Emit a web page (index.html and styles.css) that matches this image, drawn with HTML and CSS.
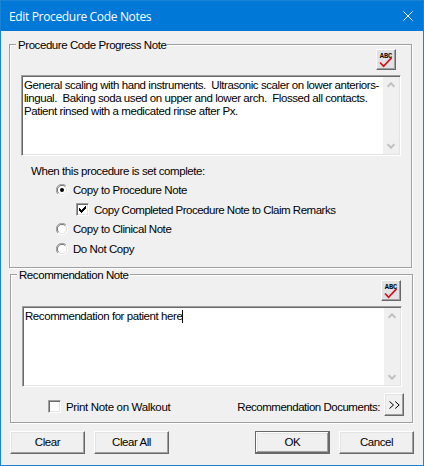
FILE: index.html
```html
<!DOCTYPE html>
<html lang="en">
<head>
    <meta charset="UTF-8">
    <meta name="viewport" content="width=device-width, initial-scale=1.0">
    <title>Edit Procedure Code Notes</title>
    <link rel="stylesheet" href="styles.css">
</head>
<body>
    <div class="window">
        <div class="titlebar">
            <span class="title">Edit Procedure Code Notes</span>
            <svg class="close" width="10" height="10" viewBox="0 0 10 10"><path d="M0.4 0.4L9.6 9.6M9.6 0.4L0.4 9.6"/></svg>
        </div>

        <div class="group progress">
            <span class="legend">Procedure Code Progress Note</span>
            <div class="spell">
                <span>ABC</span>
                <svg width="14" height="11" viewBox="0 0 14 11"><path d="M1 5.5L4.6 9.3L12.5 0.8"/></svg>
            </div>
            <div class="textbox">
                <div class="text">General scaling with hand instruments.&nbsp; Ultrasonic scaler on lower anteriors-<br>lingual.&nbsp; Baking soda used on upper and lower arch.&nbsp; Flossed all contacts.<br>Patient rinsed with a medicated rinse after Px.</div>
                <div class="scrollbar">
                    <svg width="8" height="6" viewBox="0 0 8 6"><path d="M0.5 4.8L4 1.3L7.5 4.8"/></svg>
                    <svg width="8" height="6" viewBox="0 0 8 6"><path d="M0.5 1.2L4 4.7L7.5 1.2"/></svg>
                </div>
            </div>
            <p class="when">When this procedure is set complete:</p>
            <div class="option">
                <svg class="radio" width="12" height="12" viewBox="0 0 12 12"><use href="#radio-ring"/><circle cx="6" cy="6" r="2" fill="#000"/></svg>
                <span>Copy to Procedure Note</span>
            </div>
            <div class="option sub">
                <span class="checkbox"><svg width="7" height="7" viewBox="0 0 7 7" shape-rendering="crispEdges"><path d="M0 2h1v1h1v1h1v-1h1v-1h1v-1h1v-1h1v3h-1v1h-1v1h-1v1h-1v1h-1v-1h-1v-1h-1z"/></svg></span>
                <span class="remarks">Copy Completed Procedure Note to Claim Remarks</span>
            </div>
            <div class="option">
                <svg class="radio" width="12" height="12" viewBox="0 0 12 12"><use href="#radio-ring"/></svg>
                <span>Copy to Clinical Note</span>
            </div>
            <div class="option none">
                <svg class="radio" width="12" height="12" viewBox="0 0 12 12"><use href="#radio-ring"/></svg>
                <span>Do Not Copy</span>
            </div>
        </div>

        <div class="group recommendation">
            <span class="legend">Recommendation Note</span>
            <div class="spell">
                <span>ABC</span>
                <svg width="14" height="11" viewBox="0 0 14 11"><path d="M1 5.5L4.6 9.3L12.5 0.8"/></svg>
            </div>
            <div class="textbox">
                <div class="text">Recommendation for patient here<i class="caret"></i></div>
                <div class="scrollbar">
                    <svg width="8" height="6" viewBox="0 0 8 6"><path d="M0.5 4.8L4 1.3L7.5 4.8"/></svg>
                    <svg width="8" height="6" viewBox="0 0 8 6"><path d="M0.5 1.2L4 4.7L7.5 1.2"/></svg>
                </div>
            </div>
            <div class="bottom-row">
                <span class="checkbox"></span>
                <span class="print">Print Note on Walkout</span>
                <span class="docs">Recommendation Documents:</span>
                <div class="btn more"><svg width="11" height="8" viewBox="0 0 11 8"><path d="M0.5 0.5L4.5 4L0.5 7.5M6.2 0.5L10.2 4L6.2 7.5"/></svg></div>
            </div>
        </div>

        <div class="footer">
            <div class="btn">Clear</div>
            <div class="btn">Clear All</div>
            <div class="btn ok">OK</div>
            <div class="btn">Cancel</div>
        </div>
    </div>

    <svg class="defs" width="0" height="0">
        <defs>
            <g id="radio-ring">
                <circle cx="6" cy="6" r="5" fill="#fff"/>
                <path d="M1.9 10.1A5.6 5.6 0 0 1 10.1 1.9" fill="none" stroke="#a0a0a0"/>
                <path d="M2.7 9.3A4.6 4.6 0 0 1 9.3 2.7" fill="none" stroke="#696969"/>
                <path d="M10.1 1.9A5.6 5.6 0 0 1 1.9 10.1" fill="none" stroke="#fff"/>
                <path d="M9.3 2.7A4.6 4.6 0 0 1 2.7 9.3" fill="none" stroke="#e3e3e3"/>
            </g>
        </defs>
    </svg>
</body>
</html>
```

FILE: styles.css
```css
* {
    margin: 0;
    padding: 0;
    box-sizing: border-box;
}

body {
    width: 424px;
    height: 466px;
    overflow: hidden;
    font-family: "Liberation Sans", Arial, sans-serif;
    font-size: 11.5px;
    letter-spacing: -0.43px;
    line-height: 13px;
    color: #000;
    white-space: nowrap;
}

svg {
    display: block;
    flex: none;
}

.defs {
    position: absolute;
}

.window {
    width: 424px;
    height: 466px;
    border: 1px solid #1883d7;
    background: #f0f0f0;
}

.titlebar {
    display: flex;
    justify-content: space-between;
    align-items: center;
    height: 30px;
    padding: 0 10px 0 8px;
    background: #0078d7;
    color: #fff;
}

.title {
    font-family: "Open Sans", "Noto Sans", sans-serif;
    font-size: 12px;
    letter-spacing: -0.34px;
}

.close path {
    stroke: #fff;
    fill: none;
}

/* etched group frames */
.group {
    width: 403px;
    border: 1px solid #a0a0a0;
    box-shadow: 1px 1px 0 #fff, inset 1px 1px 0 #fff;
}

.progress {
    height: 224px;
    margin: 13px 0 0 8px;
}

.recommendation {
    height: 149px;
    margin: 6px 0 0 9px;
}

.legend {
    display: block;
    width: 151px;
    height: 13px;
    margin: -6px 0 0 6px;
    padding-left: 2px;
    background: #f0f0f0;
}

.recommendation .legend {
    width: 113px;
}

.spell {
    display: flex;
    flex-direction: column;
    align-items: center;
    width: 20px;
    height: 21px;
    margin: -3px 15px 0 auto;
    padding-top: 3px;
    border: 1px solid;
    border-color: #fff #696969 #696969 #fff;
    box-shadow: inset -1px -1px 0 #a0a0a0;
    background: #e1e1e6;
}

.recommendation .spell {
    margin: -2px 11px 0 auto;
}

.spell span {
    font: bold 7px/6px "Liberation Mono", monospace;
    letter-spacing: 0;
}

.spell svg {
    margin-top: -2px;
}

.spell path {
    fill: none;
    stroke: #c8191e;
    stroke-width: 1.8;
}

.textbox {
    display: flex;
    width: 380px;
    height: 81px;
    margin: 5px 0 0 11px;
    border: 1px solid;
    border-color: #a0a0a0 #fff #fff #a0a0a0;
    box-shadow: inset 1px 1px 0 #696969, inset -1px -1px 0 #e3e3e3;
    background: #fff;
}

.text {
    flex: 1;
    min-width: 0;
    padding: 3px 0 0 2px;
}

.scrollbar {
    display: flex;
    flex: none;
    flex-direction: column;
    justify-content: space-between;
    align-items: center;
    width: 16px;
    margin: 1px 1px 1px 0;
    padding: 5px 0;
    background: #f0f0f0;
}

.scrollbar path {
    fill: none;
    stroke: #bfbfbf;
    stroke-width: 2;
}

.caret {
    display: inline-block;
    width: 1px;
    height: 13px;
    background: #000;
    vertical-align: top;
}

.when {
    margin: 9px 0 0 21px;
}

.option {
    display: flex;
    align-items: center;
    height: 13px;
    margin: 6px 0 0 46px;
    gap: 5px;
}

.option.sub {
    margin: 7px 0 0 66px;
}

.option .radio {
    margin-top: -2px;
}

.option.none {
    margin-top: 7px;
}

.remarks {
    letter-spacing: -0.49px;
}

.checkbox {
    display: flex;
    flex: none;
    width: 13px;
    height: 13px;
    padding: 2px;
    border: 1px solid;
    border-color: #a0a0a0 #fff #fff #a0a0a0;
    box-shadow: inset 1px 1px 0 #696969, inset -1px -1px 0 #e3e3e3;
    background: #fff;
}

.sub .checkbox {
    margin-top: -2px;
}

.bottom-row {
    display: flex;
    align-items: center;
    height: 23px;
    margin: 6px 8px 0 37px;
}

.bottom-row .checkbox {
    margin-top: 4px;
}

.print {
    margin: 5px 0 0 5px;
    letter-spacing: -0.34px;
}

.docs {
    margin: 5px 4px 0 auto;
    letter-spacing: -0.48px;
}

.btn {
    display: flex;
    justify-content: center;
    align-items: center;
    width: 75px;
    height: 23px;
    border: 1px solid;
    border-color: #fff #696969 #696969 #fff;
    box-shadow: inset -1px -1px 0 #a0a0a0, inset 1px 1px 0 #e3e3e3;
    background: #f0f0f0;
}

.btn.more {
    width: 20px;
}

.more path {
    fill: none;
    stroke: #000;
}

.btn.ok {
    margin-left: auto;
    border-color: #696969;
    box-shadow: inset -1px -1px 0 #696969, inset 1px 1px 0 #fff, inset -2px -2px 0 #a0a0a0, inset 2px 2px 0 #e3e3e3;
}

.footer {
    display: flex;
    gap: 9px;
    margin: 8px 9px 0 9px;
}
```
